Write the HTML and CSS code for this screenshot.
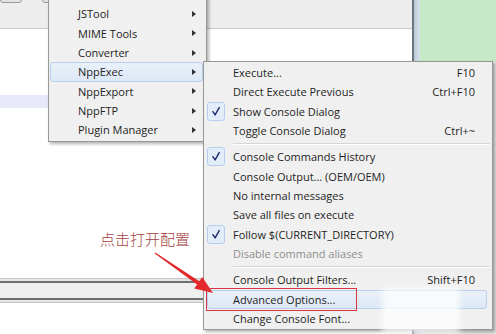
FILE: index.html
```html
<!DOCTYPE html>
<html>
<head>
  <meta charset="UTF-8">
  <title>NppExec</title>
  <link rel="stylesheet" href="styles.css">
</head>
<body>
  <div class="app">
    <!-- Editor window behind the menus -->
    <div class="main">
      <div class="toolbar">
        <span class="tb-btn"></span>
        <span class="tb-btn small"></span>
        <span class="tb-btn"></span>
      </div>
      <div class="editor">
        <div class="cur-line"></div>
      </div>
      <div class="panel"><div class="panel-inner"></div></div>
      <div class="console"></div>
    </div>
    <div class="side">
      <div class="side-bar"></div>
      <div class="side-body">
        <div class="side-green"></div>
      </div>
    </div>
  </div>

  <!-- Plugins menu -->
  <div class="menu plugins">
    <div class="item sub"><span class="arrow"></span></div>
    <div class="item sub">JSTool<span class="arrow"></span></div>
    <div class="item sub">MIME Tools<span class="arrow"></span></div>
    <div class="item sub">Converter<span class="arrow"></span></div>
    <div class="item sub hot">NppExec<span class="arrow"></span></div>
    <div class="item sub">NppExport<span class="arrow"></span></div>
    <div class="item sub">NppFTP<span class="arrow"></span></div>
    <div class="item sub">Plugin Manager<span class="arrow"></span></div>
  </div>

  <!-- NppExec submenu -->
  <div class="menu exec">
    <div class="item"><span class="check"></span><span class="label">Execute...</span><span class="key">F10</span></div>
    <div class="item"><span class="check"></span><span class="label">Direct Execute Previous</span><span class="key">Ctrl+F10</span></div>
    <div class="item"><span class="check on"><svg viewBox="0 0 18 18"><path d="M5.5 9.2 L8 12.8 L12.6 4.6" fill="none" stroke="#1d2b6f" stroke-width="1.6" stroke-linejoin="round" stroke-linecap="round"/></svg></span><span class="label">Show Console Dialog</span><span class="key"></span></div>
    <div class="item"><span class="check"></span><span class="label">Toggle Console Dialog</span><span class="key">Ctrl+~</span></div>
    <div class="sep"></div>
    <div class="item"><span class="check on"><svg viewBox="0 0 18 18"><path d="M5.5 9.2 L8 12.8 L12.6 4.6" fill="none" stroke="#1d2b6f" stroke-width="1.6" stroke-linejoin="round" stroke-linecap="round"/></svg></span><span class="label">Console Commands History</span><span class="key"></span></div>
    <div class="item"><span class="check"></span><span class="label">Console Output... (OEM/OEM)</span><span class="key"></span></div>
    <div class="item"><span class="check"></span><span class="label">No internal messages</span><span class="key"></span></div>
    <div class="item"><span class="check"></span><span class="label">Save all files on execute</span><span class="key"></span></div>
    <div class="item"><span class="check on"><svg viewBox="0 0 18 18"><path d="M5.5 9.2 L8 12.8 L12.6 4.6" fill="none" stroke="#1d2b6f" stroke-width="1.6" stroke-linejoin="round" stroke-linecap="round"/></svg></span><span class="label">Follow $(CURRENT_DIRECTORY)</span><span class="key"></span></div>
    <div class="item disabled"><span class="check"></span><span class="label">Disable command aliases</span><span class="key"></span></div>
    <div class="sep"></div>
    <div class="item"><span class="check"></span><span class="label">Console Output Filters...</span><span class="key">Shift+F10</span></div>
    <div class="item hot"><span class="check"></span><span class="label">Advanced Options...</span><span class="key"></span></div>
    <div class="item"><span class="check"></span><span class="label">Change Console Font...</span><span class="key"></span></div>
  </div>

  <!-- Annotation -->
  <div class="note">点击打开配置</div>
  <svg class="pointer" width="496" height="334" viewBox="0 0 496 334">
    <polygon points="154.7,253.4 197.1,284.4 194.2,288.6 213,293 202.2,277 199.3,281.2 155.3,252.6" fill="#e3292b"/>
  </svg>
  <div class="mark"></div>
  <div class="watermark"></div>
</body>
</html>
```

FILE: styles.css
```css
* {
  box-sizing: border-box;
}

html, body {
  margin: 0;
  padding: 0;
  width: 496px;
  height: 334px;
  overflow: hidden;
  background: #fff;
  font-family: "Open Sans", "Noto Sans", sans-serif;
  font-size: 11px;
  color: #1e1e1e;
  position: relative;
}

/* background window */
.app {
  display: flex;
  height: 334px;
}

.main {
  width: 412px;
  display: flex;
  flex-direction: column;
}

.toolbar {
  height: 29px;
  background: #ededed;
  border-bottom: 1px solid #c9c9c9;
  display: flex;
  gap: 20px;
  align-items: flex-start;
}

.tb-btn {
  width: 22px;
  height: 12px;
  margin-top: -9px;
  border: 1px solid #9a9a9a;
  border-radius: 3px;
  background: #e2e2e2;
}

.tb-btn.small {
  width: 10px;
}

.editor {
  height: 249px;
  background: #fff;
  padding-top: 66px;
}

.cur-line {
  height: 13px;
  background: #e8e8fb;
}

.panel {
  height: 25px;
  border-top: 1px solid #c4c4c4;
  border-bottom: 1px solid #c4c4c4;
  padding: 2px 0;
  background: #e6e6e6;
}

.panel-inner {
  height: 100%;
  border-top: 2px solid #707070;
  border-bottom: 2px solid #707070;
  background: #efefef;
}

.console {
  flex: 1;
  background: #fff;
}

.side {
  flex: 1;
  display: flex;
}

.side-bar {
  width: 8px;
  border-left: 2px solid #6b7580;
  background: linear-gradient(90deg, #b9cad8, #d7e3ec);
}

.side-body {
  flex: 1;
  background: #e4e4e4;
}

.side-green {
  height: 62px;
  background: #c6eac8;
}

/* menus */
.menu {
  position: absolute;
  background: #f0f0f0;
  border: 1px solid #979797;
  box-shadow: 2px 2px 3px rgba(0, 0, 0, 0.3);
}

.plugins {
  left: 48px;
  top: -17px;
  width: 159px;
  padding: 1px 3px 1px 1px;
}

.exec {
  left: 203px;
  top: 61px;
  width: 290px;
  padding: 1px 2px;
}

.item {
  height: 19.33px;
  display: flex;
  align-items: center;
  border: 1px solid transparent;
  border-radius: 3px;
  white-space: nowrap;
}

.plugins .item {
  padding: 0 6px 0 27px;
  justify-content: space-between;
}

.plugins .item:first-child {
  justify-content: flex-end;
}

.item.hot {
  background: linear-gradient(#e9f0f9, #dde8f6);
  border-color: #b8d0ee;
}

.exec .item.hot {
  margin: 0 3px 0 1px;
}

.arrow {
  width: 0;
  height: 0;
  border-top: 3.5px solid transparent;
  border-bottom: 3.5px solid transparent;
  border-left: 4px solid #303030;
}

.exec .item {
  padding-right: 14px;
}

.check {
  width: 18px;
  height: 19px;
  margin-right: 8px;
  flex: none;
}

.exec .item.hot .check {
  width: 17px;
}

.check.on {
  border: 1px solid #b4cfee;
  border-radius: 3px;
  background: #e3edfa;
}

.check svg {
  display: block;
  width: 16px;
  height: 17px;
}

.label {
  flex: 1;
}

.disabled {
  color: #8e8e8e;
}

.sep {
  height: 7px;
  margin-left: 27px;
  padding-top: 3px;
}

.sep::before {
  content: "";
  display: block;
  border-top: 1px solid #d7d7d7;
  border-bottom: 1px solid #fff;
}

.sep:last-of-type {
  height: 8px;
}

/* annotation */
.note {
  position: absolute;
  left: 100px;
  top: 229px;
  font-family: "Noto Sans CJK SC", sans-serif;
  font-size: 15px;
  line-height: 20px;
  color: #a2403e;
  font-weight: 300;
}

.pointer {
  position: absolute;
  left: 0;
  top: 0;
}

.mark {
  position: absolute;
  left: 206px;
  top: 288px;
  width: 151px;
  height: 23px;
  border: 1px solid #d6363c;
}

.watermark {
  position: absolute;
  left: 382px;
  top: 288px;
  width: 78px;
  height: 46px;
  background: rgba(255, 255, 255, 0.75);
  filter: blur(3px);
}
```
